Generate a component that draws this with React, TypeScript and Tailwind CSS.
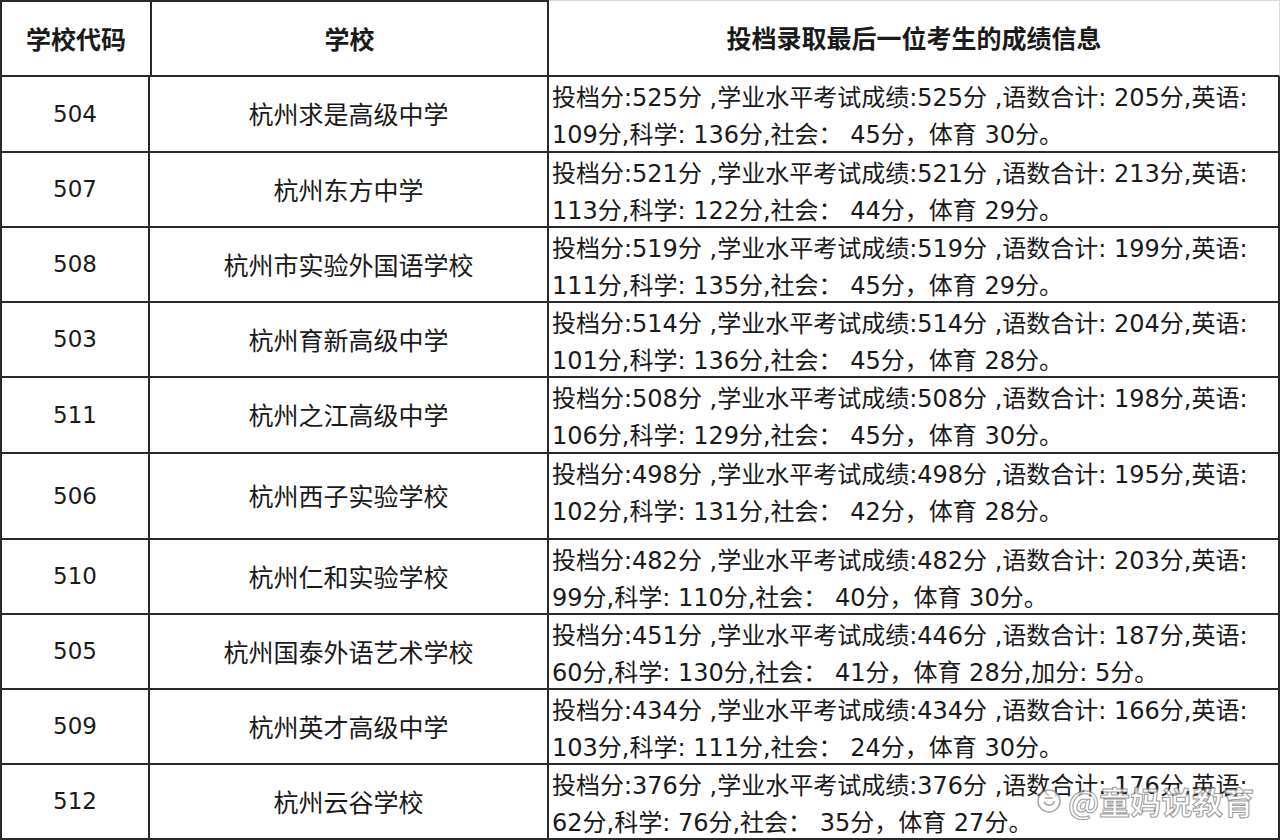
const rows = [
  { code: "504", name: "杭州求是高级中学", a: "投档分:525分 ,学业水平考试成绩:525分 ,语数合计: 205分,英语:", b: "109分,科学: 136分,社会： 45分，体育 30分。", h: "h-[76px]" },
  { code: "507", name: "杭州东方中学", a: "投档分:521分 ,学业水平考试成绩:521分 ,语数合计: 213分,英语:", b: "113分,科学: 122分,社会： 44分，体育 29分。", h: "h-[75px]" },
  { code: "508", name: "杭州市实验外国语学校", a: "投档分:519分 ,学业水平考试成绩:519分 ,语数合计: 199分,英语:", b: "111分,科学: 135分,社会： 45分，体育 29分。", h: "h-[75px]" },
  { code: "503", name: "杭州育新高级中学", a: "投档分:514分 ,学业水平考试成绩:514分 ,语数合计: 204分,英语:", b: "101分,科学: 136分,社会： 45分，体育 28分。", h: "h-[75px]" },
  { code: "511", name: "杭州之江高级中学", a: "投档分:508分 ,学业水平考试成绩:508分 ,语数合计: 198分,英语:", b: "106分,科学: 129分,社会： 45分，体育 30分。", h: "h-[76px]" },
  { code: "506", name: "杭州西子实验学校", a: "投档分:498分 ,学业水平考试成绩:498分 ,语数合计: 195分,英语:", b: "102分,科学: 131分,社会： 42分，体育 28分。", h: "h-[86px]" },
  { code: "510", name: "杭州仁和实验学校", a: "投档分:482分 ,学业水平考试成绩:482分 ,语数合计: 203分,英语:", b: "99分,科学: 110分,社会： 40分，体育 30分。", h: "h-[75px]" },
  { code: "505", name: "杭州国泰外语艺术学校", a: "投档分:451分 ,学业水平考试成绩:446分 ,语数合计: 187分,英语:", b: "60分,科学: 130分,社会： 41分，体育 28分,加分: 5分。", h: "h-[75px]" },
  { code: "509", name: "杭州英才高级中学", a: "投档分:434分 ,学业水平考试成绩:434分 ,语数合计: 166分,英语:", b: "103分,科学: 111分,社会： 24分，体育 30分。", h: "h-[75px]" },
  { code: "512", name: "杭州云谷学校", a: "投档分:376分 ,学业水平考试成绩:376分 ,语数合计: 176分,英语:", b: "62分,科学: 76分,社会： 35分，体育 27分。", h: "h-[75px]" },
];

export default function App() {
  return (
    <div className="relative w-[1280px] h-[840px] overflow-hidden bg-white text-[#1a1a1a] font-['DejaVu_Sans','Noto_Sans_CJK_SC',sans-serif]">
      {/* header */}
      <div className="flex h-[77px]">
        <div className="w-[150px] shrink-0 flex items-center justify-center border-2 border-r-0 border-[#2a2a2a] text-[25px] font-bold font-['Noto_Sans_CJK_SC',sans-serif]">
          学校代码
        </div>
        <div className="w-[399px] shrink-0 flex items-center justify-center border-2 border-[#2a2a2a] text-[25px] font-bold font-['Noto_Sans_CJK_SC',sans-serif]">
          学校
        </div>
        <div className="flex-1 flex items-center justify-center border-t border-r border-[#d8dbe0] border-b-2 border-b-[#2a2a2a] text-[25px] font-bold font-['Noto_Sans_CJK_SC',sans-serif]">
          投档录取最后一位考生的成绩信息
        </div>
      </div>

      {/* body */}
      <div className="border-l-2 border-[#2a2a2a]">
        {rows.map((r) => (
          <div key={r.code} className={`flex border-b-2 border-[#2a2a2a] ${r.h}`}>
            <div className="w-[148px] shrink-0 flex items-center justify-center border-r-2 border-[#2a2a2a] text-[23px]">
              {r.code}
            </div>
            <div className="w-[399px] shrink-0 flex items-center justify-center border-r-2 border-[#2a2a2a] text-[25px] font-['Noto_Sans_CJK_SC',sans-serif]">
              {r.name}
            </div>
            <div className="flex-1 border-r-2 border-[#2a2a2a] pl-[3px] pt-[3px] text-[24px] leading-[37px] whitespace-nowrap">
              <div>{r.a}</div>
              <div>{r.b}</div>
            </div>
          </div>
        ))}
      </div>

      {/* watermark */}
      <div className="absolute left-[1036px] top-[778px] flex items-center gap-[6px] opacity-75">
        <svg width="26" height="26" viewBox="0 0 26 26">
          <circle cx="13" cy="13" r="11" fill="white" stroke="#8a8a8a" strokeWidth="1.5" />
          <path d="M8 14c1.5 2.5 4 3.5 6.5 3 2-.4 3.5-2 3.5-4" fill="none" stroke="#8a8a8a" strokeWidth="1.5" />
          <path d="M9 10h8" stroke="#8a8a8a" strokeWidth="1.5" />
        </svg>
        <span className="text-[31px] font-bold text-white font-['Noto_Sans_CJK_SC',sans-serif] [-webkit-text-stroke:1px_#7a7a7a]">
          @童妈说教育
        </span>
      </div>
    </div>
  );
}
